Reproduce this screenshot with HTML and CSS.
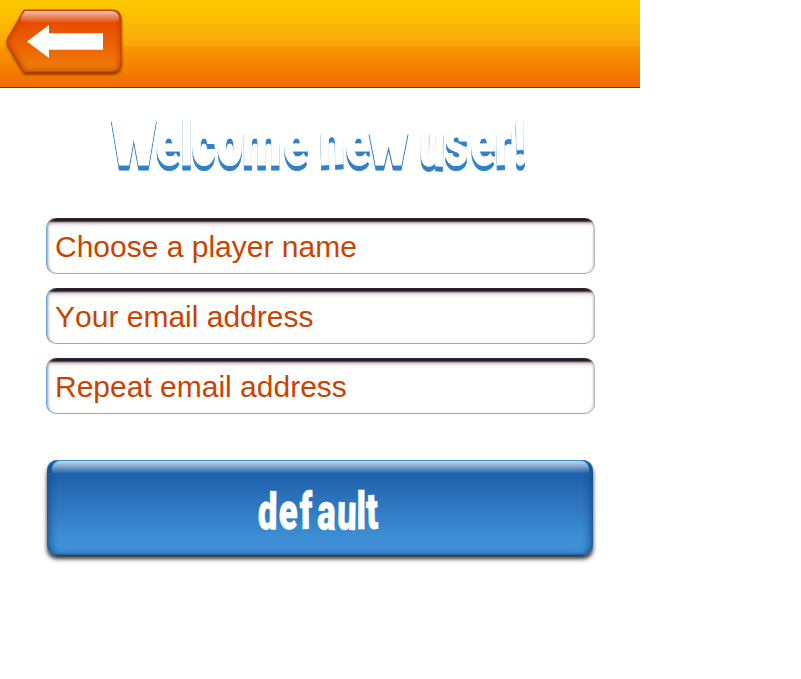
FILE: index.html
```html
<!DOCTYPE html>
<html lang="en">
<head>
<meta charset="utf-8">
<title>Welcome new user!</title>
<link rel="stylesheet" href="styles.css">
</head>
<body>
<main class="screen">
  <header class="bar">
    <svg class="back" width="128" height="84" viewBox="0 0 128 84">
      <defs>
        <linearGradient id="face" x1="0" y1="0" x2="0" y2="1">
          <stop offset="0" stop-color="#d84000"/><stop offset=".25" stop-color="#e75000"/><stop offset=".6" stop-color="#ee6500"/><stop offset="1" stop-color="#ec800c"/>
        </linearGradient>
        <linearGradient id="shine" x1="0" y1="0" x2="0" y2="1">
          <stop offset="0" stop-color="#fff" stop-opacity=".7"/><stop offset="1" stop-color="#fff" stop-opacity=".06"/>
        </linearGradient>
        <filter id="soft"><feGaussianBlur stdDeviation="2"/></filter>
        <clipPath id="shape"><path d="M24 10H112Q121 10 121 19V63Q121 72 112 72H24L8 45Q6 41 8 38Z"/></clipPath>
      </defs>
      <path d="M24 10H112Q121 10 121 19V63Q121 72 112 72H24L8 45Q6 41 8 38Z" fill="url(#face)"/>
      <g clip-path="url(#shape)">
        <path d="M24 10H112Q121 10 121 19V63Q121 72 112 72H24L8 45Q6 41 8 38Z" fill="none" stroke="#b93400" stroke-width="4" opacity=".7" filter="url(#soft)"/>
      </g>
      <path d="M24 10H112Q121 10 121 19V63Q121 72 112 72H24L8 45Q6 41 8 38Z" fill="none" stroke="#d03a00" stroke-width="1"/>
      <path d="M25 11H111Q119 11 119 19V22H21Q20 19 22 15Z" fill="url(#shine)"/>
      <path d="M27 41.500L49 25V33.200H103V49.800H49V58Z" fill="#fff"/>
    </svg>
  </header>
  <h1 class="title">
    <svg width="640" height="80">
      <text class="title-text" transform="scale(.68 1)" y="53"><tspan x="163" textLength="68" lengthAdjust="spacingAndGlyphs">W</tspan><tspan x="229 265 282 319 356 417 449" rotate="0 0 0 0 0 0 0">elcome </tspan><tspan x="470 508" rotate="-2 0">ne</tspan><tspan x="542" textLength="59" lengthAdjust="spacingAndGlyphs">w</tspan><tspan x="600 616 654 692 728 756" rotate="0 2 0 0 -2 -2"> user!</tspan></text>
    </svg>
  </h1>
  <form class="form">
    <div class="field">Choose a player name</div>
    <div class="field">Your email address</div>
    <div class="field">Repeat email address</div>
    <button class="submit" type="button">
      <svg width="546" height="94">
        <text class="submit-text" transform="scale(.68 1)" y="68" x="310 341 372 397 426 455 470" rotate="1 0 -1 2 2 0 -2">default</text>
      </svg>
    </button>
  </form>
</main>
</body>
</html>
```
FILE: styles.css
```css
body {
  margin: 0;
  background: #fff;
}
.screen {
  width: 640px;
  min-height: 679px;
}
.bar {
  box-sizing: border-box;
  height: 88px;
  border-bottom: 1px solid #873300;
  background: linear-gradient(#fdc900 0, #fcc400 10px, #faa40c 46px, #fb9700 47px, #f06e00 87px);
}
.back {
  display: block;
  filter: drop-shadow(0 2px 1.500px rgba(90, 35, 0, .8));
}
.title {
  height: 80px;
  margin: 24px 0 0;
}
.title svg,
.submit svg {
  display: block;
  overflow: visible;
}
.title-text {
  font: 900 67px Roboto, sans-serif;
  fill: #fff;
  stroke: #fff;
  stroke-width: 1px;
  filter: drop-shadow(0 5px 0 #3180c8);
}
.form {
  display: flex;
  flex-direction: column;
  gap: 14px;
  margin: 26px 45px 0 46px;
}
.field {
  box-sizing: border-box;
  height: 56px;
  padding: 1px 8px 0;
  border-radius: 10px;
  border-left: 1px solid #68a4d8;
  border-bottom: 1px solid #82b3de;
  background: linear-gradient(#241f28 0, #241f28 3px, #8d7c80 4px, #d5caca 5px, #f5efef 7px, #fff 10px);
  box-shadow: inset 3px 0 3px -2px #a08f92, inset -3px 0 3px -2px #a08f92;
  font: 30px/56px "Liberation Sans", sans-serif;
  font-kerning: none;
  color: #c84400;
}
.submit {
  width: 546px;
  height: 95px;
  margin: 32px 0 0 1px;
  padding: 0;
  border: 0;
  border-radius: 10px;
  position: relative;
  background: linear-gradient(#1f68b2 0, #2062ac 16px, #2b73bc 40px, #3e8fd5 78px, #3e8fd5 94px);
  box-shadow: inset 0 1px 0 #3e8fca, inset 6px 0 9px -4px #144a87, inset -6px 0 9px -4px #144a87, inset 0 -2px 2px -1px #2368a8, 0 4px 4px rgba(0, 0, 0, .8);
}
.submit::before {
  content: "";
  position: absolute;
  top: 1px;
  left: 5px;
  right: 4px;
  height: 12px;
  border-radius: 8px 8px 0 0;
  background: linear-gradient(rgba(255, 255, 255, .75), rgba(255, 255, 255, .04));
}
.submit-text {
  font: 900 51px Roboto, sans-serif;
  fill: #fff;
  stroke: #fff;
  stroke-width: .6px;
}
```
